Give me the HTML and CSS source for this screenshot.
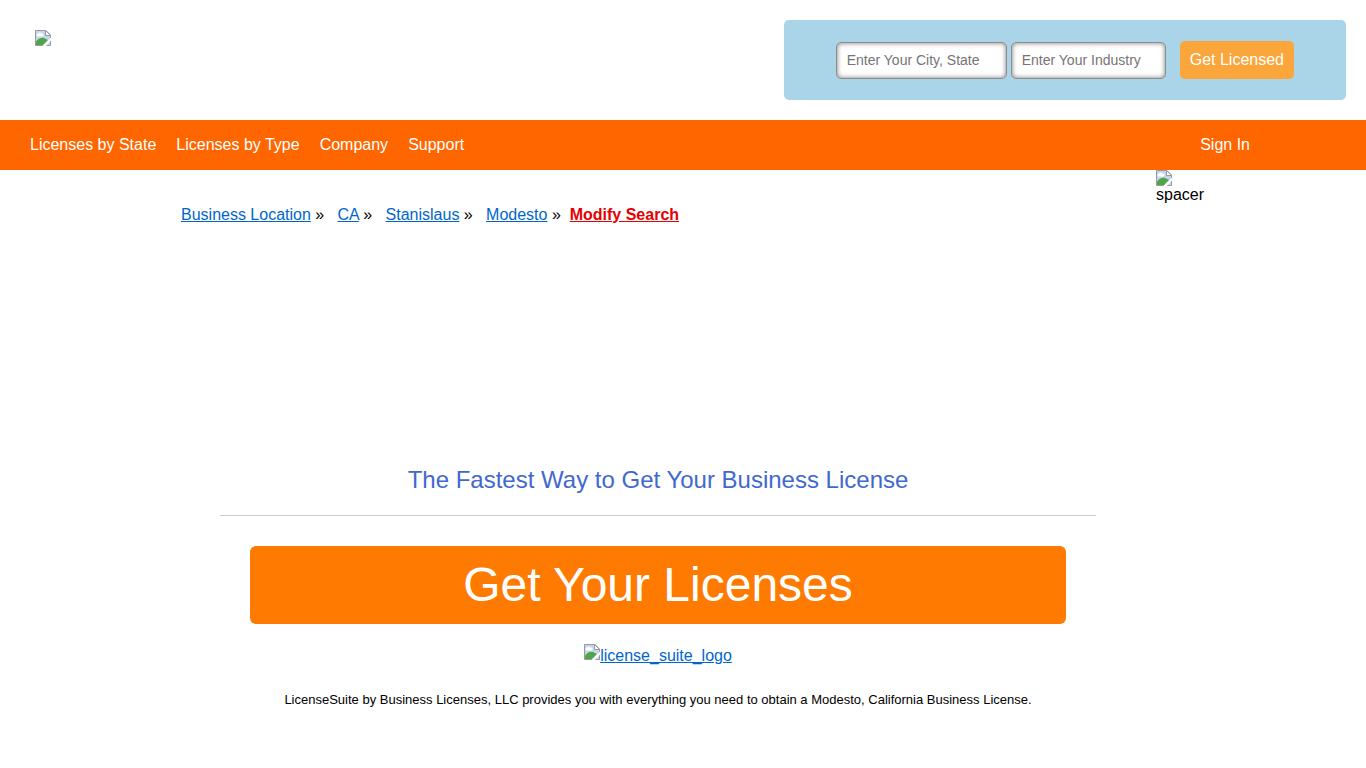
FILE: index.html
```html
<!DOCTYPE html>
<html lang="en">
<head>
    <meta charset="UTF-8">
    <meta name="viewport" content="width=device-width, initial-scale=1.0">
    <title>Modesto, California Business License</title>
    <link rel="stylesheet" href="styles.css">
</head>
<body>
    <svg class="defs" aria-hidden="true">
        <symbol id="missing-image" viewBox="0 0 16 16">
            <path d="M.5 .5h10.500l4.500 4.500v10.500h-15z" fill="#c3d5f3"/>
            <path d="M2 6.500a2 2 0 0 1 1-3 2 2 0 0 1 3.500 0 1.500 1.500 0 0 1 1 3z" fill="#fff"/>
            <path d="M1 15v-3.500c2-2.500 5-4.500 8-3.500l4 2L8 15z" fill="#4fa548"/>
            <path d="M.5 15.500V.5h10.500l4.500 4.500v10.500z" fill="none" stroke="#9a9a9a"/>
            <path d="M10.500 .5v5h5z" fill="#fff" stroke="#9a9a9a"/>
            <path d="M16 7.500v3L11 16H7.500z" fill="#fff"/>
        </symbol>
    </svg>

    <header class="header">
        <a href="#" class="logo" aria-label="Home"><svg class="missing"><use href="#missing-image"/></svg></a>
        <form class="search">
            <input type="text" class="field city" placeholder="Enter Your City, State" aria-label="City, State">
            <input type="text" class="field industry" placeholder="Enter Your Industry" aria-label="Industry">
            <button type="submit" class="search-button">Get Licensed</button>
        </form>
    </header>

    <nav class="nav">
        <div class="menu">
            <a href="#">Licenses by State</a>
            <a href="#">Licenses by Type</a>
            <a href="#">Company</a>
            <a href="#">Support</a>
        </div>
        <a href="#">Sign In</a>
    </nav>

    <div class="container">
        <main class="content">
            <div class="breadcrumb">
                <a href="#">Business Location</a> » &nbsp;
                <a href="#">CA</a> » &nbsp;
                <a href="#">Stanislaus</a> » &nbsp;
                <a href="#">Modesto</a> »&nbsp;
                <a href="#" class="modify">Modify Search</a>
            </div>

            <section class="offer">
                <h1>The Fastest Way to Get Your Business License</h1>
                <div class="offer-body">
                    <a href="#" class="get-button">Get Your Licenses</a>
                    <a href="#" class="suite-logo"><svg class="missing"><use href="#missing-image"/></svg><span>license_suite_logo</span></a>
                    <p>LicenseSuite by Business Licenses, LLC provides you with everything you need to obtain a Modesto, California Business License.</p>
                </div>
            </section>
        </main>

        <aside class="side">
            <svg class="missing"><use href="#missing-image"/></svg>
            <span>spacer</span>
        </aside>
    </div>
</body>
</html>
```
FILE: styles.css
```css
* {
    box-sizing: border-box;
    margin: 0;
    padding: 0;
}

body {
    background: #fff;
    color: #000;
    font-family: "Liberation Sans", Arial, sans-serif;
    font-size: 16px;
    line-height: 18px;
}

a {
    color: #0066cc;
}

.defs {
    display: none;
}

.missing {
    display: block;
    flex: none;
    width: 16px;
    height: 16px;
}

/* Header */
.header {
    display: flex;
    justify-content: space-between;
    align-items: flex-start;
    padding: 20px;
}

.logo {
    padding: 10px 15px;
}

.search {
    display: flex;
    align-items: center;
    height: 80px;
    padding: 0 52px;
    background: #aad4e8;
    border-radius: 5px;
}

.field {
    height: 37px;
    padding: 0 10px;
    border: 1px solid #8c8c8c;
    border-radius: 5px;
    background: #fff;
    box-shadow: inset 0 0 5px #777;
    font-family: inherit;
    font-size: 14px;
}

.field::placeholder {
    color: #757575;
}

.city {
    width: 171px;
    margin-right: 4px;
}

.industry {
    width: 155px;
    margin-right: 14px;
}

.search-button {
    height: 38px;
    padding: 0 10px;
    border: none;
    border-radius: 5px;
    background: #faa63b;
    color: #fff;
    font-family: inherit;
    font-size: 16px;
    cursor: pointer;
}

/* Navigation */
.nav {
    display: flex;
    justify-content: space-between;
    align-items: center;
    height: 50px;
    padding: 0 116px 0 30px;
    background: #ff6600;
}

.nav a {
    color: #fff;
    text-decoration: none;
}

.menu {
    display: flex;
    gap: 20px;
}

/* Page */
.container {
    display: flex;
    max-width: 1046px;
    margin: 0 auto;
}

.content {
    flex: 1;
}

.breadcrumb {
    padding: 36px 21px 0;
}

.breadcrumb .modify {
    color: #e60000;
    font-weight: bold;
}

.side {
    width: 50px;
}

.side span {
    display: block;
}

.offer {
    margin: 240px 60px 0;
    text-align: center;
}

.offer h1 {
    padding-bottom: 19px;
    border-bottom: 1px solid #ccc;
    color: #4169cd;
    font-size: 24px;
    font-weight: normal;
    line-height: 32px;
}

.offer-body {
    padding: 30px;
}

.get-button {
    display: block;
    padding: 10px;
    border-radius: 6px;
    background: #ff7a00;
    color: #fff;
    font-size: 48px;
    line-height: 58px;
    text-decoration: none;
}

.suite-logo {
    display: inline-flex;
    margin-top: 20px;
}

.suite-logo span {
    padding-top: 3px;
}

.offer p {
    margin-top: 26px;
    font-size: 13px;
}
```
